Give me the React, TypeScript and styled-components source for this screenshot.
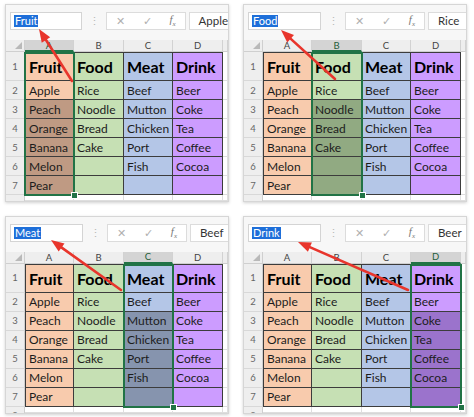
import styled, { createGlobalStyle } from 'styled-components';

const GlobalStyle = createGlobalStyle`
    html, body {
        margin: 0;
        padding: 0;
        background: #ffffff;
    }
    body {
        font-family: 'Lato', 'Liberation Sans', sans-serif;
    }
`

const Page = styled.div`
    display: grid;
    grid-template-columns: 224px 224px;
    column-gap: 14px;
    row-gap: 10px;
    padding: 4px 7px 0 5px;
    width: 474px;
    height: 417px;
    box-sizing: border-box;
`

const Panel = styled.div`
    position: relative;
    height: 198px;
    background: #ffffff;
    border: 1px solid #d6d6d6;
    box-shadow: 0 1px 3px rgba(0, 0, 0, 0.18);
    overflow: hidden;
    box-sizing: border-box;
`

const Toolbar = styled.div`
    display: flex;
    align-items: flex-start;
    height: 35px;
    padding: 7px 0 0 4px;
    box-sizing: border-box;
    background: #f7f7f7;
`

const NameBox = styled.div`
    display: flex;
    align-items: center;
    width: 73px;
    height: 18px;
    padding-left: 3px;
    box-sizing: border-box;
    background: #ffffff;
    border: 1px solid #d4d4d4;
`

const Selected = styled.span`
    background: #1e6fd9;
    color: #ffffff;
    font-size: 11px;
    line-height: 12px;
    padding: 0 1px;
`

const Dots = styled.div`
    width: 24px;
    height: 18px;
    line-height: 18px;
    text-align: center;
    color: #b8b8b8;
    font-size: 11px;
`

const FormulaBox = styled.div`
    display: flex;
    align-items: center;
    justify-content: space-around;
    width: 80px;
    height: 18px;
    box-sizing: border-box;
    background: #ffffff;
    border: 1px solid #dcdcdc;
    color: #b0b0b0;
    font-size: 11px;
`

const Fx = styled.span`
    font-family: 'Liberation Serif', serif;
    font-style: italic;
    color: #777777;
    font-size: 11px;
    sub {
        font-size: 7px;
    }
`

const ValueBox = styled.div`
    flex: 1;
    height: 18px;
    margin-left: 3px;
    padding-left: 9px;
    box-sizing: border-box;
    background: #ffffff;
    border: 1px solid #dcdcdc;
    border-right: none;
    font-size: 11.5px;
    line-height: 16px;
    color: #333333;
`

const Sheet = styled.div`
    display: flex;
    height: 161px;
    background: #ffffff;
`

const Strip = styled.div<{ $w?: number }>`
    display: flex;
    flex-direction: column;
    width: ${p => (p.$w ? `${p.$w}px` : 'auto')};
    flex: ${p => (p.$w ? 'none' : 1)};
`

const Corner = styled.div`
    position: relative;
    height: 12px;
    flex: none;
    background: #eeeeee;
    border-right: 1px solid #cfcfcf;
    border-bottom: 1px solid #cfcfcf;
    box-sizing: border-box;
    &::after {
        content: '';
        position: absolute;
        right: 2px;
        bottom: 2px;
        border-left: 7px solid transparent;
        border-bottom: 7px solid #b9b9b9;
    }
`

const ColHeader = styled.div<{ $active?: boolean }>`
    display: flex;
    align-items: center;
    justify-content: center;
    height: 12px;
    flex: none;
    background: ${p => (p.$active ? '#d4d4d4' : '#eeeeee')};
    border-right: 1px solid #d2d2d2;
    border-bottom: ${p => (p.$active ? '2px solid #217346' : '1px solid #cfcfcf')};
    box-sizing: border-box;
    font-size: 9.5px;
    color: ${p => (p.$active ? '#1f5e3a' : '#444444')};
`

const RowHeader = styled.div<{ $h: number }>`
    display: flex;
    align-items: center;
    justify-content: center;
    height: ${p => p.$h}px;
    flex: none;
    background: #eeeeee;
    border-right: 1px solid #cfcfcf;
    border-bottom: 1px solid #d8d8d8;
    box-sizing: border-box;
    font-size: 9.5px;
    color: #666666;
`

const DataGroup = styled.div<{ $selected: boolean }>`
    position: relative;
    display: flex;
    flex-direction: column;
    flex: none;
    &::after {
        content: '';
        display: ${p => (p.$selected ? 'block' : 'none')};
        position: absolute;
        left: -1px;
        right: -1px;
        top: 0;
        bottom: -1px;
        border: 2px solid #217346;
        z-index: 2;
    }
`

const Cell = styled.div<{ $bg: string; $head?: boolean; $first?: boolean }>`
    display: flex;
    align-items: center;
    height: ${p => (p.$head ? '29px' : '19px')};
    padding-left: 3px;
    background: ${p => p.$bg};
    border-right: 1px solid #3c3c3c;
    border-bottom: 1px solid #3c3c3c;
    border-top: ${p => (p.$head ? '1px solid #3c3c3c' : 'none')};
    border-left: ${p => (p.$first ? '1px solid #3c3c3c' : 'none')};
    box-sizing: border-box;
    font-size: ${p => (p.$head ? '16px' : '12px')};
    font-weight: ${p => (p.$head ? 700 : 400)};
    color: ${p => (p.$head ? '#000000' : '#1c1c1c')};
    white-space: nowrap;
    overflow: hidden;
`

const Blank = styled.div<{ $h?: number }>`
    height: ${p => (p.$h ? `${p.$h}px` : 'auto')};
    flex: ${p => (p.$h ? 'none' : 1)};
    border-bottom: 1px solid #dedede;
    border-right: 1px solid #dedede;
    box-sizing: border-box;
`

const Handle = styled.div`
    position: absolute;
    right: -4px;
    bottom: -4px;
    width: 5px;
    height: 5px;
    background: #217346;
    border: 1px solid #ffffff;
    z-index: 3;
`

const ArrowLayer = styled.svg`
    position: absolute;
    left: 0;
    top: 0;
    width: 100%;
    height: 100%;
    pointer-events: none;
    z-index: 5;
`

const columns = [
    { key: 'A', width: 49, title: 'Fruit', items: ['Apple', 'Peach', 'Orange', 'Banana', 'Melon', 'Pear'], bg: '#f8cbad', dark: '#bf9a83' },
    { key: 'B', width: 50, title: 'Food', items: ['Rice', 'Noodle', 'Bread', 'Cake', '', ''], bg: '#c6e0b4', dark: '#91aa82' },
    { key: 'C', width: 49, title: 'Meat', items: ['Beef', 'Mutton', 'Chicken', 'Port', 'Fish', ''], bg: '#b4c6e7', dark: '#8694ae' },
    { key: 'D', width: 50, title: 'Drink', items: ['Beer', 'Coke', 'Tea', 'Coffee', 'Cocoa', ''], bg: '#cc9cff', dark: '#9b73cc' },
]

const panels = [
    { sel: 0, value: 'Apple', tip: [33, 24], tail: [66, 76] },
    { sel: 1, value: 'Rice', tip: [37, 25], tail: [91, 74] },
    { sel: 2, value: 'Beef', tip: [45, 23], tail: [115, 73] },
    { sel: 3, value: 'Beer', tip: [54, 25], tail: [164, 73] },
]

const rows = [0, 1, 2, 3, 4, 5]

const Arrow = ({ tip, tail }: { tip: number[]; tail: number[] }) => {
    const dx = tip[0] - tail[0]
    const dy = tip[1] - tail[1]
    const len = Math.hypot(dx, dy)
    const ux = dx / len
    const uy = dy / len
    const bx = tip[0] - ux * 13
    const by = tip[1] - uy * 13
    const points = `${tip[0]},${tip[1]} ${bx - uy * 5},${by + ux * 5} ${bx + uy * 5},${by - ux * 5}`
    return (
        <ArrowLayer>
            <line x1={tail[0]} y1={tail[1]} x2={bx + ux * 2} y2={by + uy * 2} stroke="#e8352c" strokeWidth={2.6} strokeLinecap="round" />
            <polygon points={points} fill="#e8352c" />
        </ArrowLayer>
    )
}

const ExcelPanel = ({ sel, value, tip, tail }: typeof panels[number]) => (
    <Panel>
        <Toolbar>
            <NameBox><Selected>{columns[sel].title}</Selected></NameBox>
            <Dots>⋮</Dots>
            <FormulaBox>
                <span>✕</span>
                <span>✓</span>
                <Fx>f<sub>x</sub></Fx>
            </FormulaBox>
            <ValueBox>{value}</ValueBox>
        </Toolbar>
        <Sheet>
            <Strip $w={19}>
                <Corner />
                <RowHeader $h={29}>1</RowHeader>
                {rows.map(r => <RowHeader key={r} $h={19}>{r + 2}</RowHeader>)}
                <RowHeader $h={19}>8</RowHeader>
            </Strip>
            {columns.map((c, i) => (
                <Strip key={c.key} $w={c.width}>
                    <ColHeader $active={i === sel}>{c.key}</ColHeader>
                    <DataGroup $selected={i === sel}>
                        <Cell $bg={c.bg} $head $first={i === 0}>{c.title}</Cell>
                        {rows.map(r => (
                            <Cell key={r} $bg={i === sel && r > 0 ? c.dark : c.bg} $first={i === 0}>{c.items[r]}</Cell>
                        ))}
                        {i === sel && <Handle />}
                    </DataGroup>
                    <Blank />
                </Strip>
            ))}
            <Strip>
                <ColHeader />
                <Blank $h={29} />
                {rows.map(r => <Blank key={r} $h={19} />)}
                <Blank />
            </Strip>
        </Sheet>
        <Arrow tip={tip} tail={tail} />
    </Panel>
)

export default function App() {
    return (
        <>
            <GlobalStyle />
            <Page>
                {panels.map(p => <ExcelPanel key={p.sel} {...p} />)}
            </Page>
        </>
    )
}
